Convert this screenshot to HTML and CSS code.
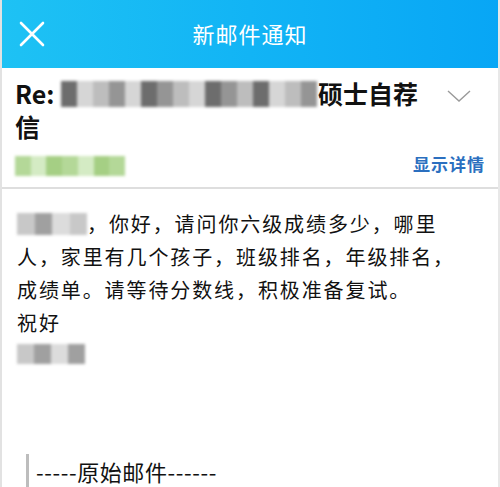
FILE: index.html
```html
<!DOCTYPE html>
<html lang="zh-CN">
<head>
<meta charset="utf-8">
<title>新邮件通知</title>
<link rel="stylesheet" href="styles.css">
</head>
<body>
<div class="page">
  <header class="topbar">
    <div class="close">
      <svg width="26" height="26" viewBox="0 0 26 26"><path d="M2 2 L24 24 M24 2 L2 24" stroke="#fff" stroke-width="2.6" stroke-linecap="round" fill="none"/></svg>
    </div>
    <div class="title">新邮件通知</div>
    <div class="spacer"></div>
  </header>

  <section class="head">
    <div class="subject-row">
      <h1 class="subject">Re: <span class="mosaic subj"><i class="a"></i><i class="d"></i><i class="b"></i><i class="c"></i><i class="d"></i><i class="a"></i><i class="c"></i><i class="b"></i><i class="d"></i><i class="a"></i><i class="c"></i><i class="b"></i><i class="a"></i><i class="d"></i><i class="b"></i><i class="c"></i></span>硕士自荐<br>信</h1>
      <svg class="chevron" width="24" height="12" viewBox="0 0 24 12"><path d="M1 1 L12 11 L23 1" stroke="#9a9a9a" stroke-width="1.4" fill="none"/></svg>
    </div>
    <div class="meta-row">
      <span class="mosaic green"><i class="g1"></i><i class="g2"></i><i class="g3"></i><i class="g1"></i><i class="g2"></i><i class="g3"></i><i class="g1"></i></span>
      <a class="details">显示详情</a>
    </div>
  </section>

  <section class="content">
    <p class="body-text"><span class="mosaic name"><i class="l1"></i><i class="l2"></i><i class="l3"></i><i class="l1"></i></span>，你好，请问你六级成绩多少，哪里<br>人，家里有几个孩子，班级排名，年级排名，<br>成绩单。请等待分数线，积极准备复试。<br>祝好</p>
    <div class="mosaic sign"><i class="l1"></i><i class="l2"></i><i class="l3"></i><i class="l2"></i></div>
    <blockquote class="quote">-----原始邮件------</blockquote>
  </section>
</div>
</body>
</html>
```

FILE: styles.css
```css
* { box-sizing: border-box; }
html, body { margin: 0; padding: 0; background: #fff; }
body {
  font-family: "Noto Sans CJK SC", "Liberation Sans", sans-serif;
  color: #111;
}
.page {
  width: 500px;
  height: 487px;
  overflow: hidden;
  border-left: 2px solid #e2e2e2;
  border-right: 2px solid #e8e8e8;
}
.topbar {
  height: 68px;
  margin: 0 -2px;
  background: linear-gradient(90deg, #1ec2f4 0%, #12b4f5 50%, #08a6f5 100%);
  display: grid;
  grid-template-columns: 1fr auto 1fr;
  align-items: center;
}
.close { padding-left: 19px; display: flex; align-items: center; }
.title {
  color: #fff;
  font-size: 22px;
  letter-spacing: 1px;
  line-height: 1;
  margin-top: -3px;
}
.head {
  padding: 9px 13px 0 13px;
  border-bottom: 2px solid #dedede;
  height: 121px;
}
.subject-row {
  display: flex;
  align-items: flex-start;
}
.subject {
  margin: 0;
  width: 410px;
  font-size: 25px;
  font-weight: 700;
  line-height: 33px;
  color: #111;
}
.chevron { margin: 13px 0 0 22px; }
.meta-row {
  display: flex;
  align-items: center;
  justify-content: space-between;
  margin-top: 7px;
}
.details {
  color: #2b6fbf;
  font-size: 17px;
  font-weight: 700;
  letter-spacing: 1px;
  margin-top: 0;
}
.mosaic { display: inline-flex; filter: blur(1.4px); vertical-align: middle; }
.mosaic i { display: block; flex: 1; }
.subj { width: 256px; height: 26px; margin: 0 1px 0 1px; vertical-align: -3px; }
.subj .a { background: #6d6d6d; }
.subj .b { background: #bdbdbd; }
.subj .c { background: #959595; }
.subj .d { background: #d6d6d6; }
.green { width: 110px; height: 20px; margin-top: 6px; }
.green .g1 { background: #b4d898; }
.green .g2 { background: #d4ebc4; }
.green .g3 { background: #a5cf84; }
.content { padding: 18px 15px 0 15px; }
.body-text {
  margin: 0;
  font-size: 20px;
  letter-spacing: 1.9px;
  line-height: 33px;
  color: #111;
}
.name { width: 70px; height: 22px; vertical-align: -3px; }
.l1 { background: #c8c8c8; }
.l2 { background: #a0a0a0; }
.l3 { background: #dcdcdc; }
.sign { width: 68px; height: 20px; margin-top: 5px; display: flex; }
.quote {
  margin: 90px 0 0 9px;
  border-left: 3px solid #bdbdbd;
  padding-left: 7px;
  font-size: 22px;
  letter-spacing: 0.6px;
  line-height: 34px;
  color: #111;
}
```
